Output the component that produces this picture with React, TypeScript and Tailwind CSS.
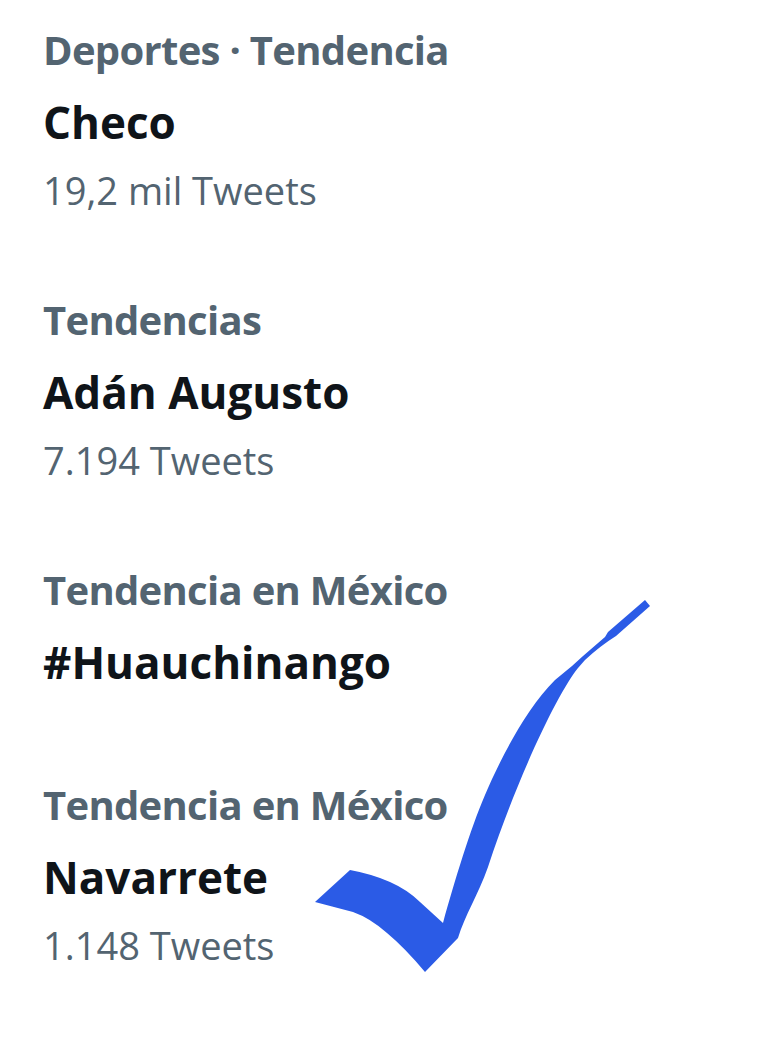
import React from 'react';

interface Trend {
  category: string;
  name: string;
  count?: string;
}

const trends: Trend[] = [
  { category: 'Deportes · Tendencia', name: 'Checo', count: '19,2 mil Tweets' },
  { category: 'Tendencias', name: 'Adán Augusto', count: '7.194 Tweets' },
  { category: 'Tendencia en México', name: '#Huauchinango' },
  { category: 'Tendencia en México', name: 'Navarrete', count: '1.148 Tweets' },
];

const TrendItem: React.FC<{ trend: Trend; last: boolean }> = ({ trend, last }) => (
  <div className={trend.count ? (last ? '' : 'mb-[62px]') : 'mb-[71px]'}>
    <div className="h-[72px] leading-[72px] text-[40px] tracking-[-0.7px] font-bold text-[#536471]">{trend.category}</div>
    <div className="h-[72px] leading-[72px] text-[44px] font-bold text-[#0f1419]">{trend.name}</div>
    {trend.count && (
      <div className="h-[64px] leading-[64px] text-[38px] text-[#536471]">{trend.count}</div>
    )}
  </div>
);

const CheckMark = () => (
  <svg className="absolute left-0 top-0 pointer-events-none" width="760" height="1050" viewBox="0 0 760 1050">
    <path
      d="M645 600 L650 606 L616 636 Q600 646 585 660 L578 668 C560 690 520 770 488 867 C478 895 465 915 458 938 L425 972 Q405 948 387 933 Q370 918 353 912 L315 902 L350 870 Q372 874 390 882 Q408 890 420 902 L443 923 C455 880 470 830 485 795 C500 760 525 710 555 680 L572 666 L583 656 L605 637 L608 632 Z"
      fill="#2b5be6"
    />
  </svg>
);

export default function App() {
  return (
    <div className="relative w-[760px] h-[1050px] bg-white overflow-hidden" style={{ fontFamily: '"Open Sans", "Noto Sans", sans-serif' }}>
      <div className="pl-[43px] pt-[14px]">
        {trends.map((t, i) => (
          <TrendItem key={i} trend={t} last={i === trends.length - 1} />
        ))}
      </div>
      <CheckMark />
    </div>
  );
}
